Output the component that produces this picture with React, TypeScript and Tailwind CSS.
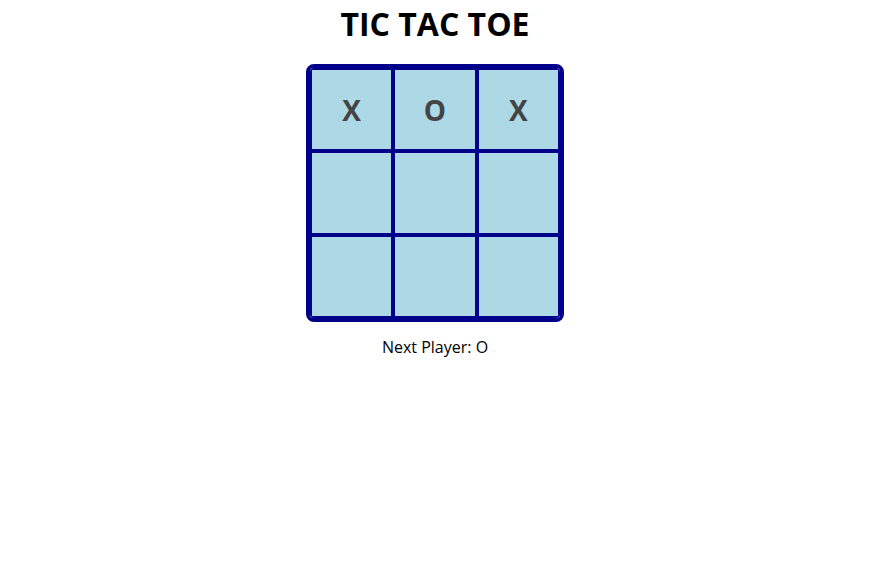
const board = ["X", "O", "X", "", "", "", "", "", ""];

export default function App() {
  return (
    <div className="w-[870px] flex flex-col items-center font-['Open_Sans',sans-serif] text-black">
      {/* title */}
      <h1 className="text-[32px] leading-[48px] font-bold">TIC TAC TOE</h1>

      {/* board */}
      <div className="mt-4 w-[258px] h-[258px] grid grid-cols-3 grid-rows-3 border-4 border-[#00008b] rounded-lg overflow-hidden">
        {board.map((v, i) => (
          <div
            key={i}
            className="border-2 border-[#00008b] bg-[#add8e6] flex items-center justify-center text-[28px] font-bold text-[#444444]"
          >
            {v}
          </div>
        ))}
      </div>

      <p className="mt-[13px] text-base leading-6">Next Player: O</p>
    </div>
  );
}
